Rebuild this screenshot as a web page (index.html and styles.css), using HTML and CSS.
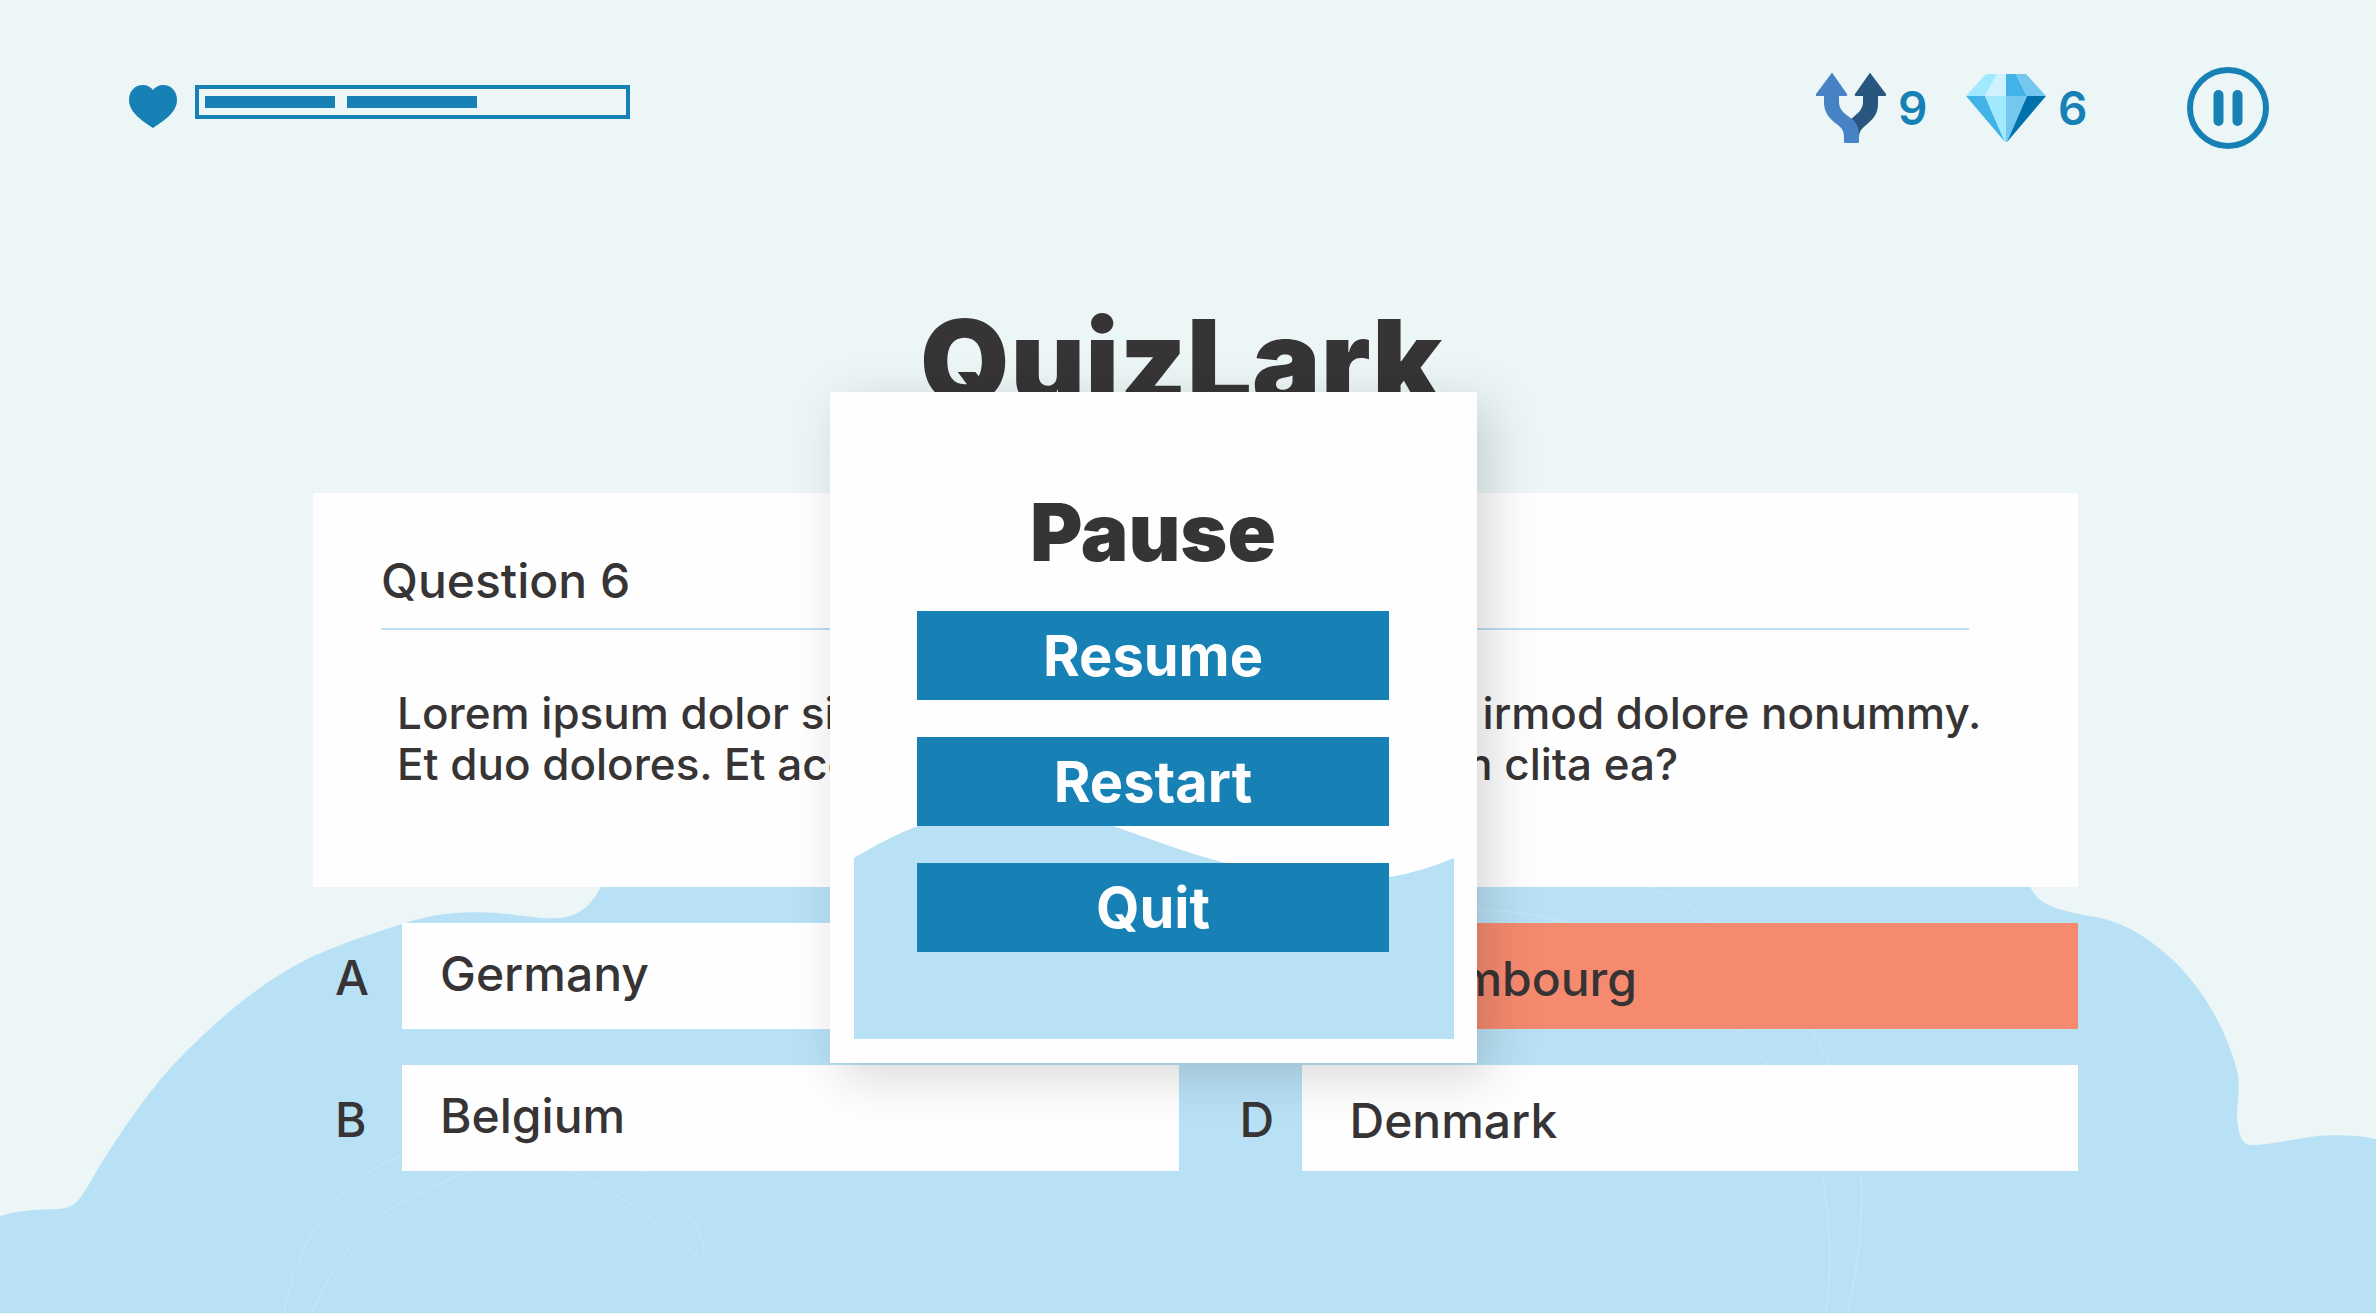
FILE: index.html
```html
<!DOCTYPE html>
<html lang="en">
<head>
<meta charset="utf-8">
<meta name="viewport" content="width=device-width, initial-scale=1">
<title>QuizLark</title>
<link rel="stylesheet" href="styles.css">
</head>
<body>
<div class="page">
  <svg class="scenery" viewBox="0 0 2376 1314" preserveAspectRatio="none" aria-hidden="true">
    <path class="hill" d="M0 1217C22 1210 40 1211 57 1210C78 1209 80 1200 99 1168C120 1134 142 1101 170 1069C206 1031 255 985 313 957C345 943 375 933 402 925C430 915 455 913 477 913C512 913 530 919 554 919C578 919 592 906 601 887L700 840H1960L2030 887C2037 903 2050 910 2091 917C2128 923 2152 942 2172 960C2204 990 2228 1033 2238 1076C2240 1092 2237 1106 2237 1117C2238 1136 2242 1146 2252 1146C2280 1145 2304 1136 2334 1136C2352 1136 2364 1137 2376 1140V1314H0Z"/>
    <g class="swirls">
      <path d="M284 1314C295 1250 330 1185 402 1156C480 1120 590 1130 643 1172C675 1198 706 1230 704 1254C702 1261 698 1257 690 1251C660 1228 628 1201 603 1188C590 1180 580 1176 568 1172C530 1158 500 1160 471 1172C430 1187 395 1205 378 1218C345 1248 327 1280 312 1314"/>
      <path d="M1645 886C1674 897 1695 910 1713 923C1760 955 1796 995 1811 1030C1840 1080 1857 1130 1861 1172C1864 1220 1858 1270 1847 1314"/>
      <path d="M1477 911C1510 911 1540 916 1562 922C1640 945 1710 985 1741 1030C1790 1095 1815 1130 1821 1172C1831 1220 1832 1270 1826 1314"/>
    </g>
  </svg>

  <header class="hud">
    <div class="health">
      <svg class="heart" viewBox="0 0 48 43" aria-hidden="true"><path d="M24 43C12 35 0 27 0 15C0 6 6 0 14 0C18 0 22 2 24 5C26 2 30 0 34 0C42 0 48 6 48 15C48 27 36 35 24 43Z"/></svg>
      <div class="health-bar" role="meter" aria-label="Health" aria-valuemin="0" aria-valuemax="3" aria-valuenow="2">
        <span class="life"></span><span class="life"></span>
      </div>
    </div>
    <div class="stats">
      <div class="stat">
        <svg class="fork" viewBox="0 0 70 70" aria-hidden="true">
          <path class="fork-right" d="M54 0Q55 0 55 1L70 21Q71 23 69 23H62V31C62 42 56 47 49 53C44 57 43 60 43 66L35 46C41 41 47 37 47 29V23H40Q38 23 39 21L53 1Q54 0 54 0Z"/>
          <path class="fork-left" d="M16 0Q17 0 17 1L31 21Q32 23 30 23H23V29C23 38 31 42 36 46C41 50 43 56 43 62V69Q43 70 42 70H29Q28 70 28 69V64C28 55 23 53 18 49C11 43 8 37 8 29V23H1Q-1 23 0 21L15 1Q15 0 16 0Z"/>
        </svg>
        <span>9</span>
      </div>
      <div class="stat">
        <svg class="gem" viewBox="0 0 80 68" aria-hidden="true">
          <path fill="#a0e9ff" d="M20 0H31L19 22H0Z"/>
          <path fill="#d0f1ff" d="M31 0H40V22H19Z"/>
          <path fill="#41b3e6" d="M40 0H50L61 22H40Z"/>
          <path fill="#74c8ef" d="M50 0H60L80 22H61Z"/>
          <path fill="#41b3e6" d="M0 22H19L39 68Z"/>
          <path fill="#a0e9ff" d="M19 22H40V68H39Z"/>
          <path fill="#74c8ef" d="M40 22H61L41 68H40Z"/>
          <path fill="#0072ab" d="M61 22H80L41 68Z"/>
        </svg>
        <span>6</span>
      </div>
      <button class="pause" type="button" aria-label="Pause">
        <svg viewBox="0 0 82 82" aria-hidden="true"><circle cx="41" cy="41" r="38"/><path d="M31.500 28V54M50.500 28V54"/></svg>
      </button>
    </div>
  </header>

  <h1 class="brand">QuizLark</h1>

  <main class="quiz">
    <section class="question">
      <h2 class="question-number">Question 6</h2>
      <p class="question-text">Lorem ipsum dolor sit amet consectetur sadipscing irmod dolore nonummy.<br>Et duo dolores. Et accusam et justo duo dolor rebum clita ea?</p>
    </section>
    <ol class="answers">
      <li class="answer"><span class="letter" id="a">A</span><button class="choice" type="button" aria-describedby="a">Germany</button></li>
      <li class="answer right"><span class="letter" id="c">C</span><button class="choice wrong" type="button" aria-describedby="c">Luxembourg</button></li>
      <li class="answer"><span class="letter" id="b">B</span><button class="choice" type="button" aria-describedby="b">Belgium</button></li>
      <li class="answer right"><span class="letter" id="d">D</span><button class="choice" type="button" aria-describedby="d">Denmark</button></li>
    </ol>
  </main>

  <div class="overlay">
    <section class="modal" role="dialog" aria-modal="true" aria-labelledby="pause-title">
      <svg class="modal-wave" viewBox="0 0 600 230" preserveAspectRatio="none" aria-hidden="true"><path d="M0 49C22 36 42 25 64 17C125 -6 195 -4 259 17C300 31 330 43 368 53C430 72 485 76 536 68C560 64 580 57 600 49V230H0Z"/></svg>
      <h2 class="modal-title" id="pause-title">Pause</h2>
      <div class="modal-actions">
        <button class="action" type="button">Resume</button>
        <button class="action" type="button">Restart</button>
        <button class="action" type="button">Quit</button>
      </div>
    </section>
  </div>
</div>
</body>
</html>
```
FILE: styles.css
```css
:root {
  --sky: #ecf6f7;
  --water: #b8e1f5;
  --blue: #1781b6;
  --ink: #373435;
  --coral: #f68a6f;
}

* { box-sizing: border-box; }

body {
  margin: 0;
  background: var(--sky);
  color: var(--ink);
  font-family: Inter, "Liberation Sans", sans-serif;
  font-weight: 500;
}

button {
  margin: 0;
  border: 0;
  font: inherit;
  color: inherit;
  cursor: pointer;
}

.page {
  position: relative;
  min-height: 100vh;
  padding-bottom: 140px;
  border-bottom: 1px solid var(--sky);
  overflow: hidden;
}

.scenery {
  position: absolute;
  inset: 0;
  width: 100%;
  height: 100%;
}

.hill { fill: var(--water); }

.swirls {
  fill: none;
  stroke: #c6e8f8;
  stroke-width: 1;
}

/* Top bar */
.hud {
  position: relative;
  display: flex;
  justify-content: space-between;
  align-items: flex-start;
  padding: 67px 107px 0 129px;
}

.health {
  display: flex;
  gap: 18px;
  padding-top: 18px;
}

.heart {
  width: 48px;
  height: 43px;
  fill: var(--blue);
}

.health-bar {
  display: flex;
  gap: 12px;
  width: 435px;
  height: 34px;
  padding: 7px 6px;
  border: 4px solid var(--blue);
}

.life {
  width: 130px;
  height: 12px;
  background: var(--blue);
}

.stats {
  display: flex;
  align-items: center;
}

.stat {
  display: flex;
  align-items: center;
  gap: 12px;
  width: 150px;
  color: var(--blue);
  font-size: 46px;
  font-weight: 600;
  line-height: 48px;
}

.stat + .stat { width: 221px; }

.fork { width: 70px; height: 70px; }
.fork-left { fill: #4782c4; }
.fork-right { fill: #29567f; }
.gem { width: 80px; height: 68px; }

.pause {
  width: 82px;
  height: 82px;
  padding: 0;
  background: none;
}

.pause svg {
  display: block;
  fill: none;
  stroke: var(--blue);
  stroke-width: 6;
}

.pause path {
  stroke-width: 10;
  stroke-linecap: round;
}

/* Title */
.brand {
  position: relative;
  margin: 152px 14px 0 0;
  font-size: 115px;
  font-weight: 900;
  line-height: 122px;
  text-align: center;
}

/* Question */
.quiz {
  position: relative;
  padding: 70px 298px 0 313px;
}

.question {
  height: 394px;
  padding: 58px 64px 0 68px;
  background: #fefefe;
}

.question-number {
  margin: 0 45px 0 0;
  padding-bottom: 17px;
  border-bottom: 2px solid #b9dff1;
  font-size: 48px;
  font-weight: 500;
  line-height: 60px;
}

.question-text {
  margin: 58px 0 0 16px;
  font-size: 44px;
  line-height: 51px;
  white-space: nowrap;
}

/* Answers */
.answers {
  display: grid;
  grid-template-columns: 1fr 1fr;
  gap: 36px 34px;
  margin: 36px 0 0;
  padding: 0;
  list-style: none;
  font-size: 48px;
}

.answer {
  display: flex;
  align-items: center;
}

.letter {
  width: 89px;
  padding: 2px 0 0 22px;
}

.choice {
  flex: 1;
  height: 106px;
  padding: 0 40px 5px 38px;
  background: #fefefe;
  text-align: left;
}

.answer.right .letter { padding-left: 27px; }

.answer.right .choice { padding: 5px 40px 0 48px; }

.choice.wrong { background: var(--coral); }

/* Pause dialog */
.overlay {
  position: absolute;
  inset: 0;
  display: flex;
  justify-content: center;
  align-items: flex-start;
  padding: 392px 69px 0 0;
}

.modal {
  position: relative;
  width: 647px;
  padding: 80px 88px 111px 87px;
  background: #fefefe;
  box-shadow: 12px 12px 48px rgba(0, 0, 0, 0.16);
}

.modal-wave {
  position: absolute;
  left: 24px;
  bottom: 24px;
  width: 600px;
  height: 230px;
  fill: var(--water);
}

.modal-title {
  position: relative;
  margin: 0 0 19px;
  font-size: 80px;
  font-weight: 900;
  line-height: 120px;
  text-align: center;
}

.modal-actions {
  position: relative;
  display: grid;
  gap: 37px;
}

.action {
  height: 89px;
  background: var(--blue);
  color: #fefefe;
  font-size: 56px;
  font-weight: 700;
}
```
